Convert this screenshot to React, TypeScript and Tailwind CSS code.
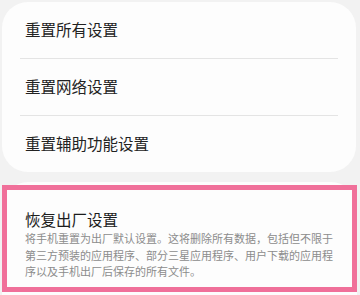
const rows = ['重置所有设置', '重置网络设置', '重置辅助功能设置']

export default function App() {
    return (
        <div
            className="h-[295px] w-[360px] overflow-hidden bg-[#f2f2f2] pt-[2px]"
            style={{ fontFamily: '"Noto Sans CJK SC", "Noto Sans", sans-serif' }}
        >
            <div className="mx-[2px] w-[354px] rounded-[26px] bg-[#fdfdfd]">
                {rows.map((label, i) => (
                    <div key={label}>
                        {i > 0 && <div className="mx-[18px] h-px bg-[#e4e4e4]" />}
                        <div className="flex h-[56px] items-center pl-[23px] text-[15.5px] text-[#222]">
                            {label}
                        </div>
                    </div>
                ))}
            </div>

            <div className="mx-[2px] mt-[10px] w-[355px] rounded-t-[26px] bg-[#fdfdfd] pt-[3px] pb-[20px]">
                <div className="border-[5px] border-[#f0709a] bg-[#fdfdfd] pt-[18px] pr-[16px] pb-[7px] pl-[18px]">
                    <div className="text-[15.5px] leading-[22px] text-[#1c1c1c]">恢复出厂设置</div>
                    <p className="text-[11px] leading-[16.5px] text-[#8c8c8c]">
                        将手机重置为出厂默认设置。这将删除所有数据，包括但不限于第三方预装的应用程序、部分三星应用程序、用户下载的应用程序以及手机出厂后保存的所有文件。
                    </p>
                </div>
            </div>
        </div>
    )
}
